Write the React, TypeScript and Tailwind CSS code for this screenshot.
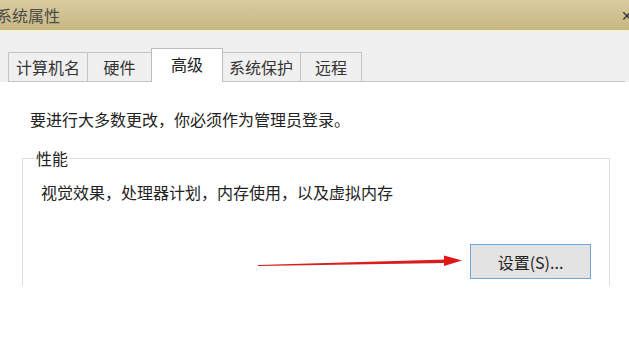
import React from "react";

const font = { fontFamily: '"Noto Sans CJK SC", "Noto Sans", sans-serif' };

function Tab({ label, w, selected }: { label: string; w: number; selected?: boolean }) {
  if (selected) {
    return (
      <div
        className="h-[34px] bg-white border border-b-0 border-[#bdbdbd] flex items-start justify-center pt-[5px] text-[16px] leading-[20px] text-[#222] -mx-[1px] relative z-10"
        style={{ width: w }}
      >
        {label}
      </div>
    );
  }
  return (
    <div
      className="h-[30px] bg-[#f0f0f0] border border-[#c4c4c4] -ml-[1px] first:ml-0 flex items-center justify-center text-[16px] leading-[20px] text-[#333]"
      style={{ width: w }}
    >
      {label}
    </div>
  );
}

export default function App() {
  return (
    <div className="w-[629px] h-[356px] bg-white overflow-hidden" style={font}>
      {/* Title bar */}
      <div className="h-[30px] bg-gradient-to-b from-[#d8cb9f] to-[#c8b783] flex items-center justify-between">
        <span className="-ml-[4px] text-[16px] leading-[20px] text-[#4a4a4a]">系统属性</span>
        <span className="-mr-[4px] text-[14px] text-[#333]">✕</span>
      </div>
      <div className="h-[2px] bg-[#f4efd9]" />
      {/* Tab strip */}
      <div className="h-[50px] bg-[#f0f0f0] flex items-end pl-[8px] pr-[4px]">
        <Tab label="计算机名" w={80} />
        <Tab label="硬件" w={65} />
        <Tab label="高级" w={72} selected />
        <Tab label="系统保护" w={80} />
        <Tab label="远程" w={62} />
        <div className="flex-1 border-b border-[#c4c4c4]" />
      </div>
      {/* Content */}
      <div className="bg-white">
        <p className="mt-[26px] pl-[30px] text-[16px] leading-[22px] text-[#222]">
          要进行大多数更改，你必须作为管理员登录。
        </p>
        <fieldset className="mt-[18px] ml-[22px] w-[588px] h-[138px] border border-b-0 border-[#dcdcdc] px-[12px]">
          <legend className="px-[1px] text-[16px] leading-[20px] text-[#222]">性能</legend>
          <p className="mt-[13px] pl-[6px] text-[16px] leading-[22px] text-[#222]">
            视觉效果，处理器计划，内存使用，以及虚拟内存
          </p>
          <div className="mt-[41px] flex items-center justify-end pr-[6px]">
            <svg width="208" height="14" viewBox="0 0 208 14" className="mr-[4px] -mt-[2px]">
              <polygon points="0,11 188,5.5 188,9 0,12" fill="#d91c1c" />
              <polygon points="186,1.5 204,6.5 186,12" fill="#e01616" />
            </svg>
            <button className="w-[121px] h-[35px] bg-[#e3e3e3] border border-[#6fa6d9] text-[16px] leading-[20px] text-[#222]">
              设置(S)...
            </button>
          </div>
        </fieldset>
      </div>
    </div>
  );
}
